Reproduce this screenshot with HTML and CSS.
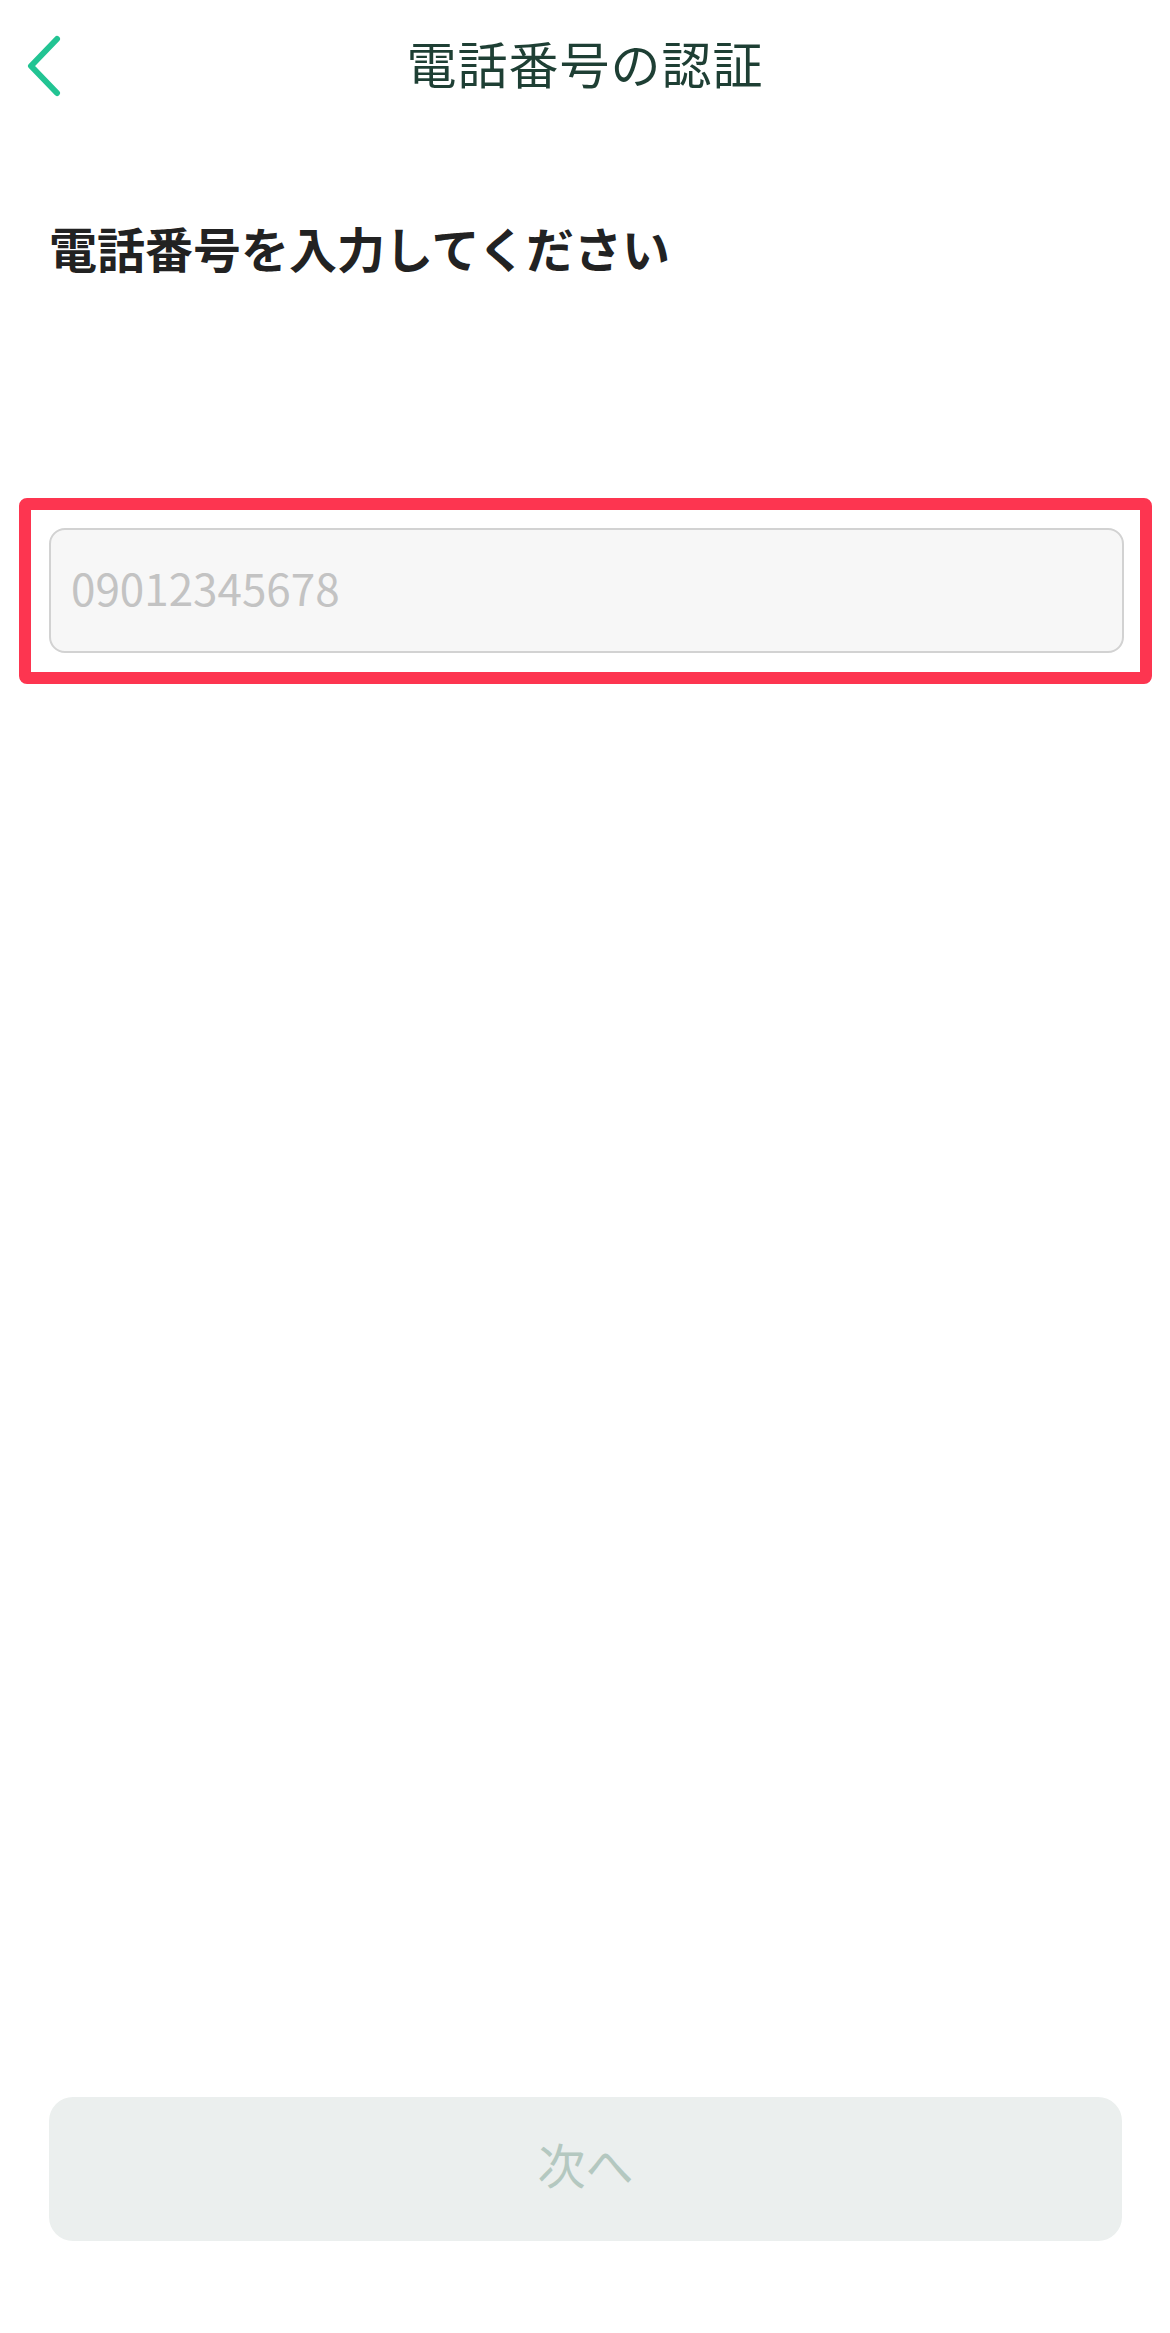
FILE: index.html
```html
<!DOCTYPE html>
<html lang="ja">
<head>
    <meta charset="UTF-8">
    <meta name="viewport" content="width=device-width, initial-scale=1.0">
    <title>電話番号の認証</title>
    <link rel="stylesheet" href="styles.css">
</head>
<body>
    <div class="screen">
        <header class="nav">
            <button class="back" aria-label="戻る">
                <svg width="40" height="66" viewBox="0 0 40 66">
                    <polyline points="33,4 7,31 33,58" fill="none" stroke="#22c493" stroke-width="6" stroke-linecap="round" stroke-linejoin="round"/>
                </svg>
            </button>
            <h1 class="nav-title">電話番号の認証</h1>
            <span></span>
        </header>

        <h2 class="heading">電話番号を入力してください</h2>

        <div class="focus-box">
            <input class="phone" type="tel" placeholder="09012345678">
        </div>

        <button class="next" disabled>次へ</button>
    </div>
</body>
</html>
```

FILE: styles.css
```css
body {
    margin: 0;
    background: #fff;
    font-family: "Noto Sans CJK JP", "Noto Sans", sans-serif;
}
.screen {
    width: 1170px;
    min-height: 2333px;
    display: flex;
    flex-direction: column;
}
.nav {
    height: 136px;
    display: grid;
    grid-template-columns: 1fr auto 1fr;
    align-items: center;
}
.back {
    justify-self: start;
    background: none;
    border: none;
    padding: 0 0 0 24px;
    display: flex;
    cursor: pointer;
}
.nav-title {
    margin: 0 0 12px;
    font-size: 50px;
    font-weight: 400;
    color: #1e3f34;
    letter-spacing: 1px;
}
.heading {
    margin: 78px 0 0 49px;
    font-size: 48px;
    line-height: 67px;
    font-weight: 700;
    color: #222;
}
.focus-box {
    margin: 217px 18px 0 19px;
    border: 12px solid #fd3550;
    border-radius: 8px;
    padding: 18px 16px 19px 18px;
}
.phone {
    display: block;
    box-sizing: border-box;
    width: 100%;
    height: 125px;
    border: 2px solid #d2d2d2;
    border-radius: 16px;
    background: #f7f7f7;
    padding: 0 20px 8px;
    font-family: "Noto Sans CJK JP", "Noto Sans", sans-serif;
    font-size: 44px;
    color: #333;
    outline: none;
}
.phone::placeholder {
    color: #c3c3c3;
}
.next {
    margin: auto 48px 92px 49px;
    height: 144px;
    border: none;
    border-radius: 24px;
    background: #ebefee;
    color: #b4c8c0;
    font-family: "Noto Sans CJK JP", "Noto Sans", sans-serif;
    font-size: 48px;
    padding: 0 0 12px;
}
```
